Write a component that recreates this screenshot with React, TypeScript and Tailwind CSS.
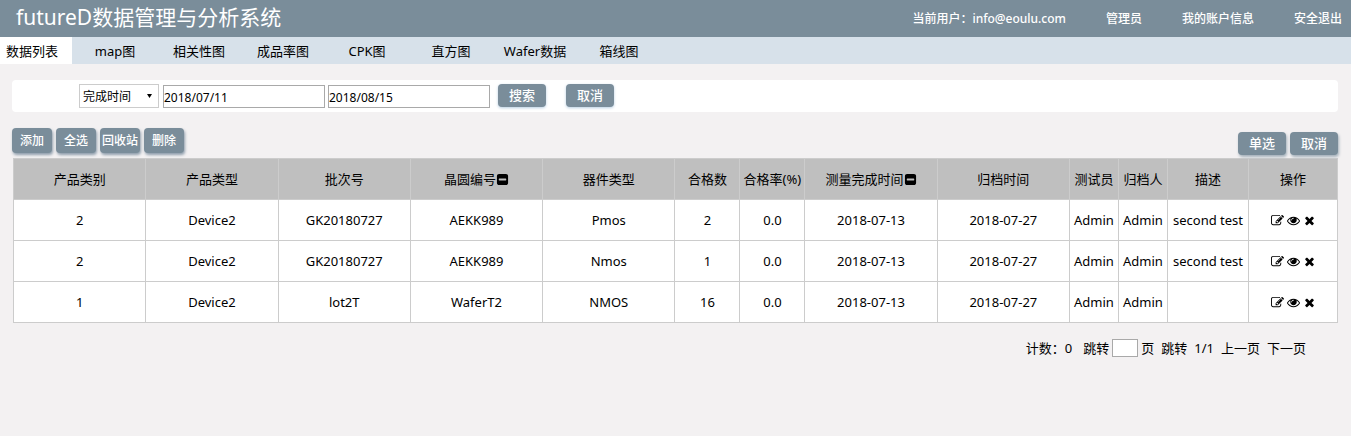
import { useState, type ReactNode } from "react";

const ICONS = {
  edit: "M888 1184l116-116-152-152-116 116v56h96v96h56zm440-720q-16-16-33 1l-350 350q-17 17-1 33t33-1l350-350q17-17 1-33zm80 594v190q0 119-84.5 203.5t-203.5 84.5h-832q-119 0-203.5-84.5t-84.5-203.5v-832q0-119 84.5-203.5t203.5-84.5h832q63 0 117 25 15 7 18 23 3 17-9 29l-49 49q-14 14-32 8-23-6-45-6h-832q-66 0-113 47t-47 113v832q0 66 47 113t113 47h832q66 0 113-47t47-113v-126q0-13 9-22l64-64q15-15 35-7t20 29zm-96-738l288 288-672 672h-288v-288zm444 132l-92 92-288-288 92-92q28-28 68-28t68 28l152 152q28 28 28 68t-28 68z",
  eye: "M1664 960q-152-236-381-353 61 104 61 225 0 185-131.5 316.5t-316.5 131.5-316.5-131.5-131.5-316.5q0-121 61-225-229 117-381 353 133 205 333.5 326.5t434.5 121.5 434.5-121.5 333.5-326.5zm-720-384q0-20-14-34t-34-14q-125 0-214.5 89.5t-89.5 214.5q0 20 14 34t34 14 34-14 14-34q0-86 61-147t147-61q20 0 34-14t14-34zm848 384q0 34-20 69-140 230-376.5 368.5t-499.5 138.5-499.5-139-376.5-368q-20-35-20-69t20-69q140-229 376.5-368t499.5-139 499.5 139 376.5 368q20 35 20 69z",
  times: "M1490 1322q0 40-28 68l-136 136q-28 28-68 28t-68-28l-294-294-294 294q-28 28-68 28t-68-28l-136-136q-28-28-28-68t28-68l294-294-294-294q-28-28-28-68t28-68l136-136q28-28 68-28t68 28l294 294 294-294q28-28 68-28t68 28l136 136q28 28 28 68t-28 68l-294 294 294 294q28 28 28 68z",
  minus: "M1408 960v-128q0-26-19-45t-45-19h-896q-26 0-45 19t-19 45v128q0 26 19 45t45 19h896q26 0 45-19t19-45zm256-544v960q0 119-84.5 203.5t-203.5 84.5h-960q-119 0-203.5-84.5t-84.5-203.5v-960q0-119 84.5-203.5t203.5-84.5h960q119 0 203.5 84.5t84.5 203.5z",
};

function Icon({ name }: { name: keyof typeof ICONS }) {
  return (
    <svg viewBox="0 0 1792 1792" className="size-[13px] shrink-0 fill-black" aria-hidden="true">
      <path d={ICONS[name]} />
    </svg>
  );
}

const TABS = ["数据列表", "map图", "相关性图", "成品率图", "CPK图", "直方图", "Wafer数据", "箱线图"];

const COLUMNS: { title: string; width: string; collapsible?: boolean }[] = [
  { title: "产品类别", width: "" },
  { title: "产品类型", width: "" },
  { title: "批次号", width: "" },
  { title: "晶圆编号", width: "", collapsible: true },
  { title: "器件类型", width: "" },
  { title: "合格数", width: "w-[65px]" },
  { title: "合格率(%)", width: "w-[65px]" },
  { title: "测量完成时间", width: "", collapsible: true },
  { title: "归档时间", width: "" },
  { title: "测试员", width: "w-[49px]" },
  { title: "归档人", width: "w-[49px]" },
  { title: "描述", width: "w-[81px]" },
  { title: "操作", width: "w-[89px]" },
];

const ROWS = [
  ["2", "Device2", "GK20180727", "AEKK989", "Pmos", "2", "0.0", "2018-07-13", "2018-07-27", "Admin", "Admin", "second test"],
  ["2", "Device2", "GK20180727", "AEKK989", "Nmos", "1", "0.0", "2018-07-13", "2018-07-27", "Admin", "Admin", "second test"],
  ["1", "Device2", "lot2T", "WaferT2", "NMOS", "16", "0.0", "2018-07-13", "2018-07-27", "Admin", "Admin", ""],
];

function ActionButton({ children, soft = false }: { children: ReactNode; soft?: boolean }) {
  return (
    <button
      type="button"
      className={`flex h-[23px] w-12 items-center justify-center rounded bg-[#7a8d9a] pb-0.5 text-[13px] leading-5 font-medium text-white ${
        soft ? "shadow-[0_1px_3px_#b9cfe2]" : "shadow-[1px_2px_3px_#a3b0ba]"
      }`}
    >
      {children}
    </button>
  );
}

function ToolButton({ children }: { children: ReactNode }) {
  return (
    <button type="button" className="h-[25px] w-10 rounded bg-[#7a8d9a] text-xs leading-6 font-medium whitespace-nowrap text-white shadow-[1px_2px_3px_#8d9dab]">
      {children}
    </button>
  );
}

function DateInput({ label, initial }: { label: string; initial: string }) {
  const [value, setValue] = useState(initial);
  return (
    <input
      type="text"
      aria-label={label}
      value={value}
      onChange={(e) => setValue(e.target.value)}
      className="mt-px h-[23px] w-[162px] border border-[#a9a9a9] bg-white pt-px text-xs"
    />
  );
}

export default function App() {
  const [tab, setTab] = useState(0);
  return (
    <div className="min-h-screen bg-[#f3f1f2] font-['Noto_Sans','Noto_Sans_CJK_SC',sans-serif] text-[13px] leading-5 text-black">
      <header className="flex h-[37px] items-center justify-between bg-[#7a8d9a] pr-[9px] pl-4 text-white">
        <h1 className="text-[21px] leading-8 pb-1">futureD数据管理与分析系统</h1>
        <div className="flex items-center gap-10 text-xs font-medium">
          <span>当前用户：info@eoulu.com</span>
          <span>管理员</span>
          <a href="#account">我的账户信息</a>
          <a href="#logout">安全退出</a>
        </div>
      </header>

      <nav className="flex h-[27px] bg-[#d7e1ea]">
        {TABS.map((name, i) => (
          <button
            key={name}
            type="button"
            onClick={() => setTab(i)}
            className={`${i === 0 ? "mr-px w-[72px] pl-1.5 text-left" : "w-[84px] text-center"} ${i === tab ? "bg-white" : ""}`}
          >
            {name}
          </button>
        ))}
      </nav>

      <main className="px-3 pt-4 pr-[13px]">
        <form className="flex h-8 rounded bg-white pt-1 pl-[67px]" onSubmit={(e) => e.preventDefault()}>
          <div className="relative mr-1">
            <select aria-label="搜索条件" className="h-6 w-20 appearance-none border border-[#ccc] bg-white pt-px pl-[3px] text-xs">
              <option>完成时间</option>
              <option>归档时间</option>
            </select>
            <svg viewBox="0 0 5 4" className="pointer-events-none absolute top-[10px] right-[7px] h-1 w-[5px]" aria-hidden="true">
              <path d="M0 0h5L2.5 4z" />
            </svg>
          </div>
          <div className="mr-2 flex gap-[3px]">
            <DateInput label="开始日期" initial="2018/07/11" />
            <DateInput label="结束日期" initial="2018/08/15" />
          </div>
          <div className="flex gap-5">
            <ActionButton soft>搜索</ActionButton>
            <ActionButton soft>取消</ActionButton>
          </div>
        </form>

        <div className="flex items-start justify-between pt-4">
          <div className="flex gap-1">
            <ToolButton>添加</ToolButton>
            <ToolButton>全选</ToolButton>
            <ToolButton>回收站</ToolButton>
            <ToolButton>删除</ToolButton>
          </div>
          <div className="flex gap-1 pt-1 pb-[3px]">
            <ActionButton>单选</ActionButton>
            <ActionButton>取消</ActionButton>
          </div>
        </div>

        <div className="pl-px">
          <table className="w-full table-fixed border-collapse bg-white text-center">
            <thead className="bg-[#bfbfbf]">
              <tr className="h-[41px]">
                {COLUMNS.map((c) => (
                  <th key={c.title} scope="col" className={`border border-[#ccc] p-0 font-normal whitespace-nowrap ${c.width}`}>
                    <span className="flex items-center justify-center">
                      {c.title}
                      {c.collapsible && (
                        <button type="button" aria-label={`收起${c.title}`}>
                          <Icon name="minus" />
                        </button>
                      )}
                    </span>
                  </th>
                ))}
              </tr>
            </thead>
            <tbody>
              {ROWS.map((row, i) => (
                <tr key={i} className="h-[41px]">
                  {row.map((cell, j) => (
                    <td key={j} className="border border-[#ccc] p-0 whitespace-nowrap">
                      {cell}
                    </td>
                  ))}
                  <td className="border border-[#ccc] p-0">
                    <div className="flex items-center justify-center gap-[3px]">
                      <button type="button" aria-label="编辑"><Icon name="edit" /></button>
                      <button type="button" aria-label="查看"><Icon name="eye" /></button>
                      <button type="button" aria-label="删除"><Icon name="times" /></button>
                    </div>
                  </td>
                </tr>
              ))}
            </tbody>
          </table>
        </div>

        <div className="flex items-center justify-end gap-[7px] pt-[15px] pr-8">
          <span className="mr-1">计数：0</span>
          <label className="flex items-center gap-[3px]">
            跳转
            <input type="text" aria-label="页码" className="h-[18px] w-[26px] border border-[#a9a9a9] bg-white text-xs" />
            页
          </label>
          <button type="button">跳转</button>
          <span>1/1</span>
          <button type="button">上一页</button>
          <button type="button">下一页</button>
        </div>
      </main>
    </div>
  );
}
